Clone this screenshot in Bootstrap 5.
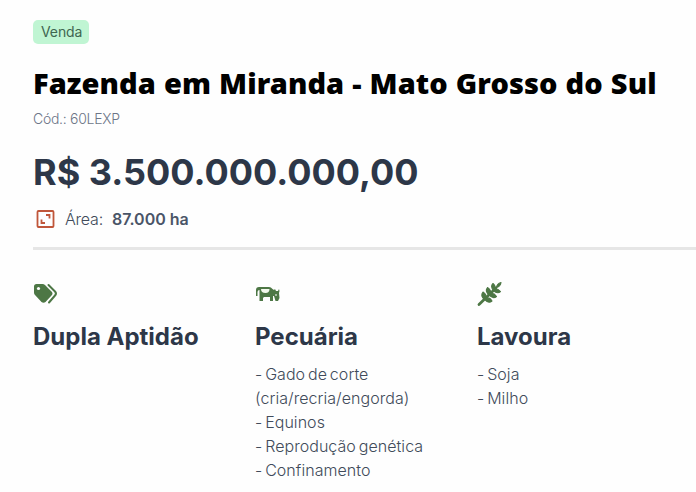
<!DOCTYPE html>
<html lang="pt-BR">
<head>
<meta charset="utf-8">
<meta name="viewport" content="width=device-width, initial-scale=1">
<title>Fazenda em Miranda - Mato Grosso do Sul</title>
<link href="https://cdn.jsdelivr.net/npm/bootstrap@5.3.0/dist/css/bootstrap.min.css" rel="stylesheet">
<style>
  body { font-family: Inter, "Liberation Sans", sans-serif; font-size: 16px; line-height: 24px; color: #414b5a; background: #fefefe; overflow: hidden; }
  .listing { padding: 20px 0 0 33px; }
  .tag-sale { background: #c0f5d3; color: #3f6650; font-size: 14px; line-height: 24px; padding: 0 8px; border-radius: 5px; width: 56px; letter-spacing: -.1px; }
  .title { font-family: "Noto Sans", "Open Sans", sans-serif; font-weight: 900; font-size: 29px; line-height: 36px; letter-spacing: .07px; word-spacing: .4px; color: #000; margin: 21px 0 0; }
  .code { font-size: 14px; line-height: 20px; font-weight: 300; color: #6c7587; letter-spacing: -.28px; margin-top: 8px; }
  .price { font-size: 36px; line-height: 44px; font-weight: 700; color: #2d3748; margin-top: 21px; }
  .area { margin-top: 13px; }
  .area-label { margin-left: 10px; font-weight: 300; letter-spacing: -.2px; }
  .area b { font-weight: 600; color: #4a5568; margin-left: 9px; }
  .rule { height: 3px; background: #e6e6e6; margin-top: 16px; }
  .uses { display: grid; grid-template-columns: 222px 222px 1fr; margin-top: 32px; }
  .uses svg { display: block; }
  .uses h2 { font-size: 24px; line-height: 32px; font-weight: 700; color: #2d3748; margin: 15px 0 9px; }
  .uses p { font-weight: 300; word-spacing: -1.7px; letter-spacing: .05px; }
</style>
</head>
<body>
<main class="listing">
  <div class="tag-sale">Venda</div>
  <h1 class="title text-nowrap">Fazenda em Miranda - Mato Grosso do Sul</h1>
  <div class="code">Cód.: 60LEXP</div>
  <div class="price text-nowrap">R$ 3.500.000.000,00</div>
  <div class="area d-flex align-items-center">
    <svg width="22" height="18" viewBox="-3.500 0 22 18" fill="none" stroke="#c0563a" stroke-width="1.800"><rect x="1" y="1" width="16" height="16" rx="1"/><path d="M9.500 5H13V8.500M5 9.500V13H8.500"/></svg>
    <span class="area-label">Área:</span><b>87.000 ha</b>
  </div>
  <div class="rule"></div>
  <div class="uses">
    <section>
      <svg width="26" height="24" viewBox="0 0 26 24"><path d="M1 4.500Q1 2 3.500 2H9.500Q11 2 12 3L18.500 9.500Q20.500 11.500 18.500 13.500L12.500 20Q10.500 21.500 8.500 20L2 13Q1 12 1 10.500Z" fill="#4d7745"/><circle cx="5.500" cy="6.500" r="1.600" fill="#fff"/><path d="M15.500 3L22 9.500Q24 11.500 22 13.500L16 20.500" fill="none" stroke="#4d7745" stroke-width="2" stroke-linecap="round"/></svg>
      <h2>Dupla Aptidão</h2>
    </section>
    <section>
      <svg width="26" height="24" viewBox="0 0 26 24"><path d="M1 14V8Q1 5 4 5H14Q16 5 17.500 7L19 8 20 7 21 9H23L24 7 24.500 9 24 11 24.500 16 23 19H20.500L19 14 18 14V19H15V15H9L8 16V19H4.500V8Q2.500 8 2.500 10V14Z" fill="#4d7745"/><path d="M6 7H14.500Q14.500 11 10.500 11Q6 11 6 7Z" fill="#f4faee"/><path d="M21 12V14" stroke="#fff"/></svg>
      <h2>Pecuária</h2>
      <p class="mb-0">- Gado de corte<br>(cria/recria/engorda)<br>- Equinos<br>- Reprodução genética<br>- Confinamento</p>
    </section>
    <section>
      <svg class="overflow-visible" width="26" height="24" viewBox="0 0 26 24" fill="#4d7745" stroke="#4d7745" stroke-width="1.100" stroke-linejoin="round"><path d="M2 22.500L19 6" stroke-width="2.800" stroke-linecap="round"/><path d="M7.500 17.500Q3 13.500 6 10Q10.500 13 8.500 17ZM12 13Q7.500 9 10.500 5.500Q15 8.500 13 12.500ZM16.500 8.500Q13 4.500 16 1.500Q19.500 4.500 17.500 8Z"/><path d="M7.500 17.500Q11.500 22 15 19Q12.500 14.500 8 16.500ZM12 13Q16 17.500 19.500 14.500Q16.500 10 12.500 12ZM16.500 8.500Q20.500 12.500 23.500 9.500Q20.500 6 17 7.500Z"/><path d="M19.500 5.500Q20 1.500 24 .5Q23.500 4.500 19.500 5.500Z"/></svg>
      <h2>Lavoura</h2>
      <p class="mb-0">- Soja<br>- Milho</p>
    </section>
  </div>
</main>
<script src="https://cdn.jsdelivr.net/npm/bootstrap@5.3.0/dist/js/bootstrap.bundle.min.js"></script>
</body>
</html>
